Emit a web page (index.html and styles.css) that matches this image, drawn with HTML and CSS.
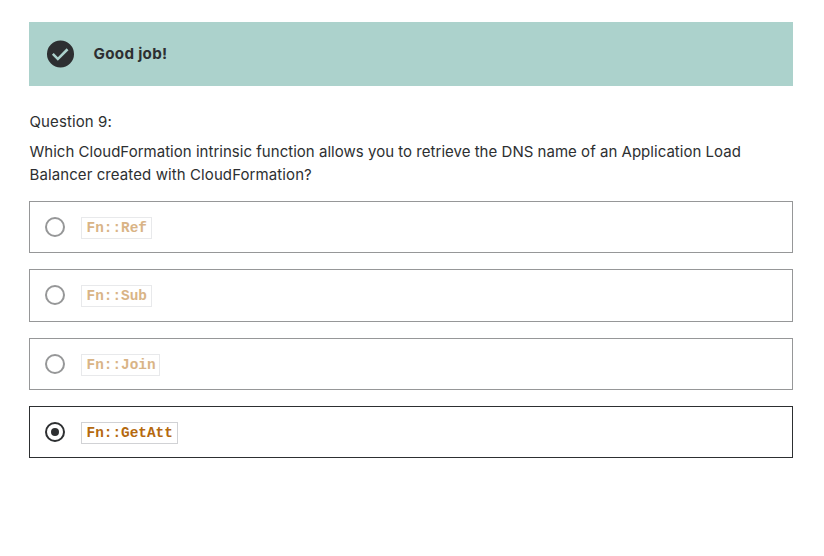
FILE: index.html
```html
<!DOCTYPE html>
<html lang="en">
<head>
<meta charset="utf-8">
<title>Quiz</title>
<link rel="stylesheet" href="styles.css">
</head>
<body>
<main class="quiz">
  <div class="alert">
    <svg class="alert-icon" viewBox="0 0 24 24"><path d="M12 .8a11.2 11.2 0 1 0 0 22.4A11.2 11.2 0 0 0 12 .8zM9.8 17.6l-4.9-4.9 1.5-1.5 3.4 3.4 7.3-7.3 1.5 1.5z"/></svg>
    <strong class="alert-title">Good job!</strong>
  </div>
  <p class="label">Question 9:</p>
  <p class="prompt">Which CloudFormation intrinsic function allows you to retrieve the DNS name of an Application Load<br><span class="prompt-end">Balancer created with CloudFormation?</span></p>
  <ul class="answers">
    <li class="answer"><span class="radio"></span><code>Fn::Ref</code></li>
    <li class="answer"><span class="radio"></span><code>Fn::Sub</code></li>
    <li class="answer"><span class="radio"></span><code>Fn::Join</code></li>
    <li class="answer selected"><span class="radio"></span><code>Fn::GetAtt</code></li>
  </ul>
</main>
</body>
</html>
```
FILE: styles.css
```css
* { box-sizing: border-box; }
body { margin: 0; background: #fff; color: #2d2f31; font-family: Inter, sans-serif; font-size: 15px; letter-spacing: .025px; }
.quiz { width: 764px; margin: 22px 0 0 29px; }
.alert { display: flex; align-items: center; height: 64px; padding-left: 17px; background: #acd2cc; }
.alert-icon { width: 29px; height: 29px; fill: #2d2f31; margin: 0 18.5px 0 0; transform: translateY(-.5px); }
.alert-title { font-weight: 700; font-size: 15.2px; letter-spacing: .3px; margin-top: -1px; }
.label { margin: 25px 0 0; padding-left: .5px; line-height: 22.4px; letter-spacing: .1px; }
.prompt { margin: 8px 0 0; padding-left: .5px; line-height: 22.4px; white-space: nowrap; }
.prompt-end { letter-spacing: .095px; }
.answers { list-style: none; margin: 14.8px 0 0; padding: 0; display: grid; gap: 16.2px; }
.answer { display: flex; align-items: center; height: 52.2px; padding-left: 15px; border: 1px solid #969798; }
.radio { width: 20px; height: 20px; border: 2px solid #969798; border-radius: 50%; margin: -.6px 16px 0 0; display: grid; place-items: center; }
code { font: 700 14.4px/20px "Liberation Mono", monospace; letter-spacing: 0; color: #d9b486; border: 1px solid #e8e9eb; padding: 0 3.8px 0 4.5px; margin-top: 1.4px; }
.selected, .selected .radio { border-color: #2d2f31; }
.selected .radio::after { content: ""; width: 8px; height: 8px; border-radius: 50%; background: #2d2f31; }
.selected code { color: #b4690e; border-color: #d1d2d5; padding-right: 4.2px; }
```
